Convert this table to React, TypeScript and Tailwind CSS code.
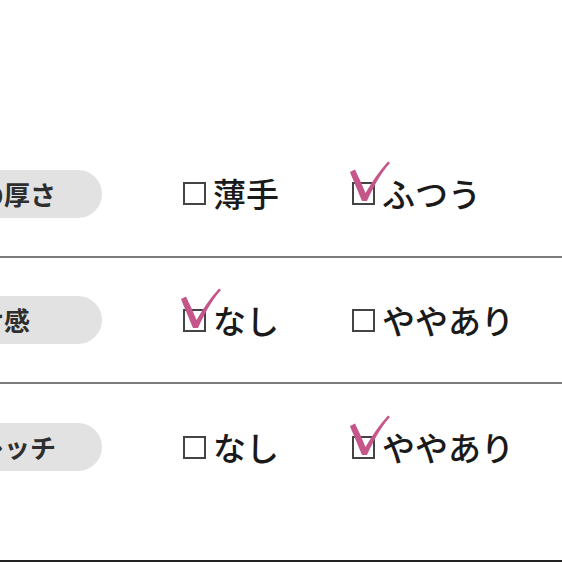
import React from 'react'

type Row = {
  label: string
  options: { text: string; checked: boolean }[]
}

const rows: Row[] = [
  { label: '生地の厚さ', options: [{ text: '薄手', checked: false }, { text: 'ふつう', checked: true }] },
  { label: '透け感', options: [{ text: 'なし', checked: true }, { text: 'ややあり', checked: false }] },
  { label: 'ストレッチ', options: [{ text: 'なし', checked: false }, { text: 'ややあり', checked: true }] },
]

const Check = () => (
  <svg className="absolute left-[-6px] top-[-24px]" width="46" height="46" viewBox="0 0 46 46">
    <path
      d="M2,12 C5,20 10,31 14,41 L19,41 C25,28 32,14 42,3 L40,1.5 C31,11 24,22 17.5,33 C14,24 10,16 7,9.5 Z"
      fill="#c5568a"
    />
  </svg>
)

const Option = ({ text, checked }: { text: string; checked: boolean }) => (
  <div className="flex items-center">
    <span className="relative block w-[23px] h-[23px] border-2 border-[#444]">
      {checked && <Check />}
    </span>
    <span className="ml-[7px] text-[33px] leading-none font-medium text-[#1a1a1a]">{text}</span>
  </div>
)

// labels run off the left edge of the page in the source
const Label = ({ text }: { text: string }) => (
  <div className="ml-[-120px] w-[222px] h-[48px] rounded-full bg-[#e2e2e2] flex items-center justify-center">
    <span className="text-[26px] font-bold text-[#2e2e2e] leading-none">{text}</span>
  </div>
)

const RowLine = ({ row }: { row: Row }) => (
  <div className="flex items-center h-full">
    <Label text={row.label} />
    <div className="ml-[81px] w-[169px]">
      <Option {...row.options[0]} />
    </div>
    <Option {...row.options[1]} />
  </div>
)

export default function App() {
  return (
    <div
      className="w-[562px] h-[562px] bg-white overflow-hidden"
      style={{ fontFamily: '"Noto Sans CJK JP", "Noto Sans", sans-serif' }}
    >
      <div className="h-[131px]" />
      <div className="h-[127px] border-b-2 border-[#7d7d7d]">
        <RowLine row={rows[0]} />
      </div>
      <div className="h-[126px] border-b-2 border-[#7d7d7d]">
        <RowLine row={rows[1]} />
      </div>
      <div className="h-[178px] border-b-2 border-[#222]">
        <div className="h-[126px]">
          <RowLine row={rows[2]} />
        </div>
      </div>
    </div>
  )
}
